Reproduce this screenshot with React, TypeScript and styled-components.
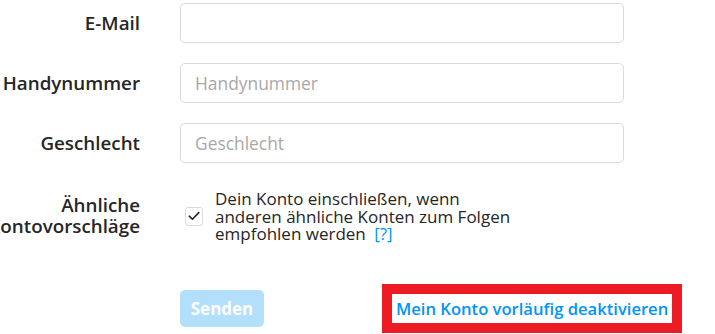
import React from 'react';
import styled, { createGlobalStyle } from 'styled-components';

const GlobalStyle = createGlobalStyle`
  html, body {
    margin: 0;
    padding: 0;
    background: #ffffff;
    overflow: hidden;
  }
  body {
    font-family: 'Open Sans', 'Noto Sans', 'DejaVu Sans', sans-serif;
    color: #262626;
  }
`;

interface IField {
  label: string;
  placeholder?: string;
}

const TextRow = (props: IField) => (
  <StRow>
    <StLabel>{props.label}</StLabel>
    <StInput placeholder={props.placeholder} />
  </StRow>
);

export default function App() {
  return (
    <>
      <GlobalStyle />
      <StForm>
        <TextRow label="E-Mail" />
        <TextRow label="Handynummer" placeholder="Handynummer" />
        <TextRow label="Geschlecht" placeholder="Geschlecht" />
        <StCheckRow>
          <StLabel>Ähnliche Kontovorschläge</StLabel>
          <StCheckField>
            <StCheckbox>
              <svg width="12" height="10" viewBox="0 0 12 10">
                <path
                  d="M1.2 5.2 L4.4 8.2 L10.8 1.6"
                  fill="none"
                  stroke="#262626"
                  strokeWidth="1.6"
                  strokeLinecap="round"
                  strokeLinejoin="round"
                />
              </svg>
            </StCheckbox>
            <StCheckText>
              Dein Konto einschließen, wenn anderen ähnliche Konten zum Folgen
              empfohlen werden <StHelp>[?]</StHelp>
            </StCheckText>
          </StCheckField>
        </StCheckRow>
        <StActions>
          <StButton disabled>Senden</StButton>
          <StMarked>
            <StLink href="#">Mein Konto vorläufig deaktivieren</StLink>
          </StMarked>
        </StActions>
      </StForm>
    </>
  );
}

const StForm = styled.div`
  display: flex;
  flex-direction: column;
  padding-top: 3px;
  margin-left: -30px;
`;

const StRow = styled.div`
  display: flex;
  align-items: center;
  gap: 40px;
  margin-bottom: 20px;
`;

const StLabel = styled.label`
  width: 170px;
  flex-shrink: 0;
  text-align: right;
  font-size: 18.8px;
  line-height: 21px;
  font-weight: 600;
  color: #262626;
`;

const StInput = styled.input`
  width: 444px;
  height: 40px;
  box-sizing: border-box;
  border: 1px solid #dbdbdb;
  border-radius: 5px;
  padding: 0 14px;
  font-family: inherit;
  font-size: 17.4px;
  color: #262626;
  background: #fff;
  outline: none;
  &::placeholder {
    color: #a8a8a8;
  }
`;

const StCheckRow = styled(StRow)`
  padding-top: 7px;
  margin-bottom: 41px;
`;

const StCheckField = styled.div`
  display: flex;
  align-items: center;
  gap: 12px;
  padding-left: 5px;
`;

const StCheckbox = styled.span`
  width: 18px;
  height: 19px;
  box-sizing: border-box;
  border: 1px solid #dbdbdb;
  border-radius: 3px;
  display: flex;
  align-items: center;
  justify-content: center;
  flex-shrink: 0;
`;

const StCheckText = styled.span`
  width: 310px;
  font-size: 17px;
  line-height: 17.5px;
  color: #262626;
`;

const StHelp = styled.a`
  color: #0095f6;
  margin-left: 4px;
`;

const StActions = styled.div`
  display: flex;
  align-items: center;
  padding-left: 210px;
  gap: 118px;
`;

const StButton = styled.button`
  width: 84px;
  height: 37px;
  border: none;
  border-radius: 5px;
  background: #b2dffc;
  color: #fff;
  font-family: inherit;
  font-size: 17px;
  font-weight: 700;
  padding: 0;
`;

const StMarked = styled.span`
  border: 10px solid #ed1c24;
  padding: 0 4px;
  height: 29px;
  display: flex;
  align-items: center;
`;

const StLink = styled.a`
  color: #0095f6;
  font-size: 16.6px;
  font-weight: 600;
  text-decoration: none;
`;
